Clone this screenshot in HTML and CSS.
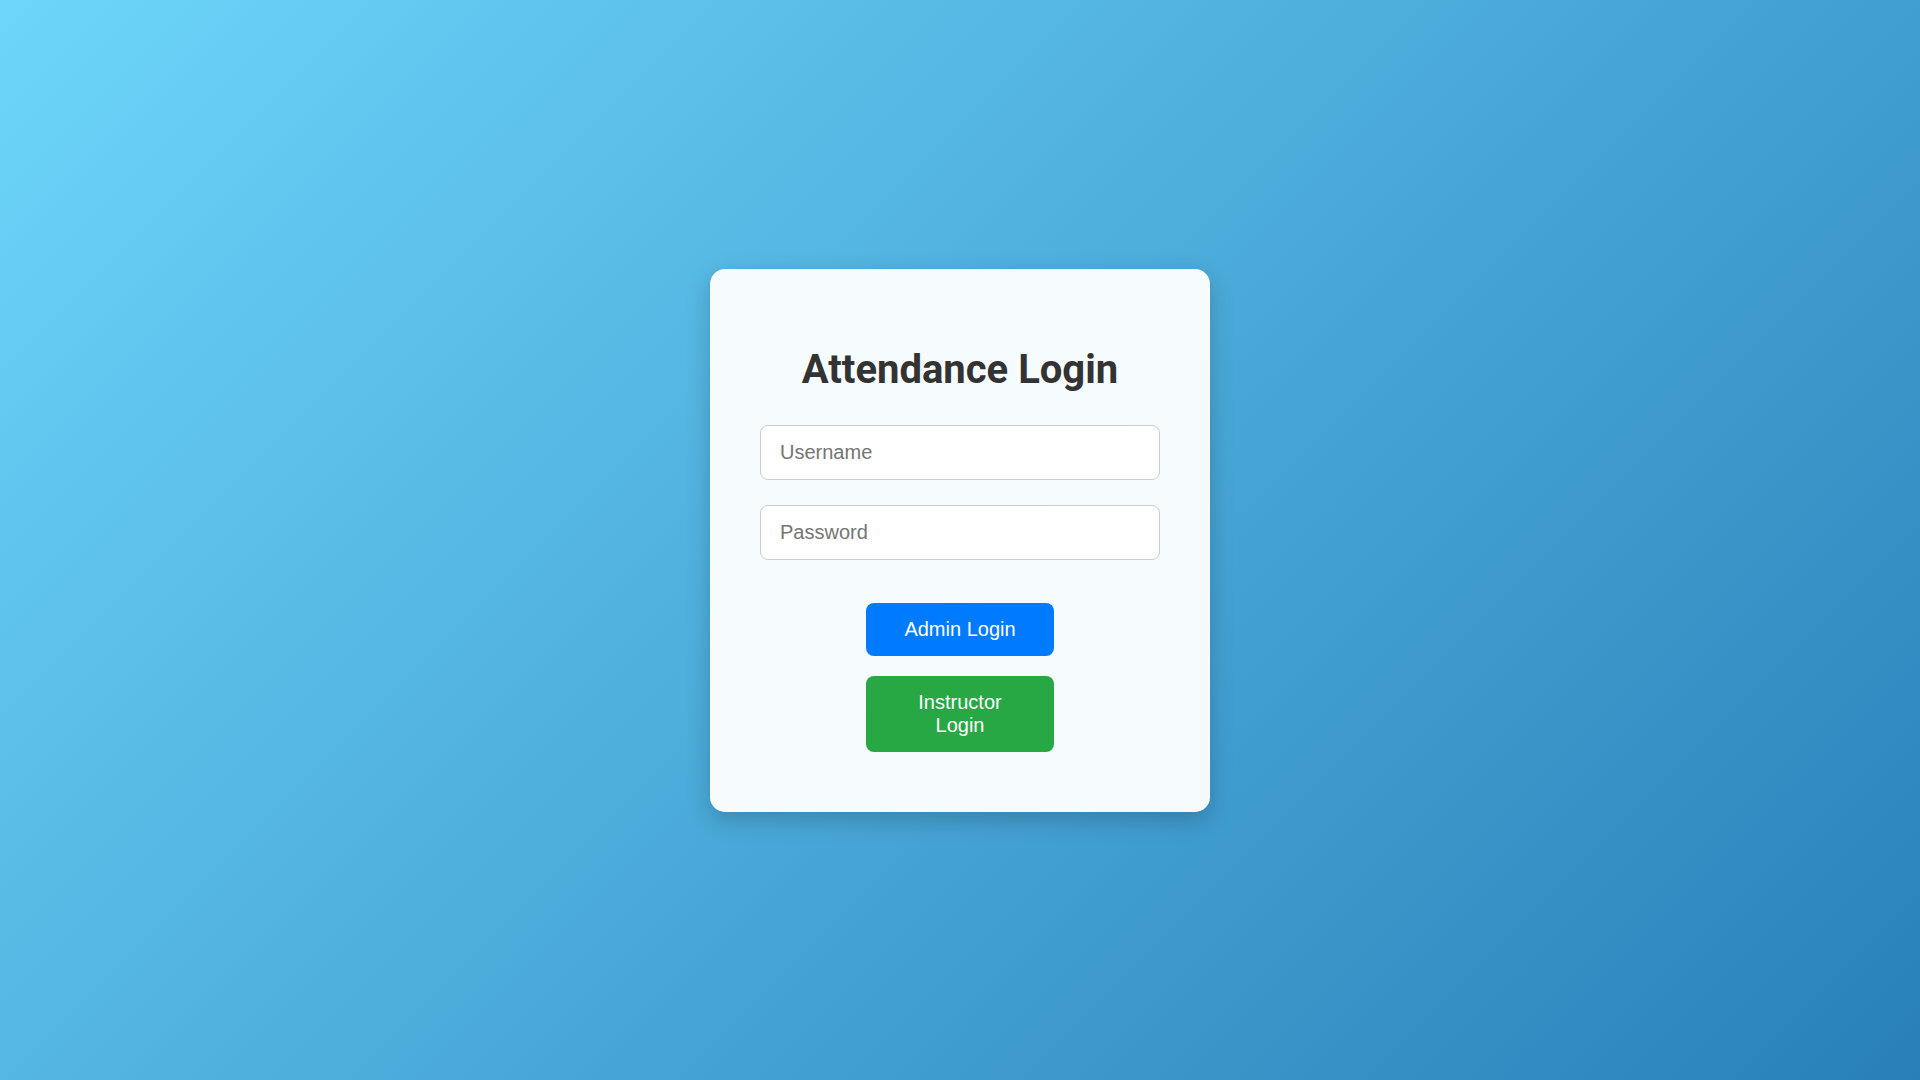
FILE: index.html
```html
<!DOCTYPE html>
<html>
<head>
<meta charset="utf-8">
<link rel="stylesheet" href="styles.css">
</head>
<body>
<div class="page">
  <div class="card">
    <h1 class="title">Attendance Login</h1>
    <input class="field" type="text" placeholder="Username">
    <input class="field" type="password" placeholder="Password">
    <div class="actions">
      <button class="btn btn-admin">Admin Login</button>
      <button class="btn btn-instructor">Instructor Login</button>
    </div>
  </div>
</div>
</body>
</html>
```
FILE: styles.css
```css
html, body {
  margin: 0;
  height: 100%;
}
body {
  background: linear-gradient(135deg, #6dd5fa, #2980b9);
  font-family: "Liberation Sans", Arial, sans-serif;
}
.page {
  height: 100%;
  display: flex;
  align-items: center;
  justify-content: center;
}
.card {
  width: 400px;
  padding: 50px 50px 60px;
  background: rgba(255, 255, 255, 0.95);
  border-radius: 15px;
  box-shadow: 0 8px 24px rgba(0, 0, 0, 0.2);
  display: flex;
  flex-direction: column;
}
.title {
  font-family: Roboto, "Liberation Sans", sans-serif;
  font-weight: 700;
  font-size: 40px;
  color: #333;
  text-align: center;
  margin: 27px 0 32px;
}
.field {
  box-sizing: border-box;
  width: 400px;
  height: 55px;
  padding: 15px 19px;
  border: 1px solid #ccc;
  border-radius: 8px;
  font-family: "Liberation Sans", Arial, sans-serif;
  font-size: 20px;
  background: #fff;
  margin: 0 0 25px;
}
.field::placeholder {
  color: #757575;
}
.actions {
  margin-top: 18px;
  display: flex;
  flex-direction: column;
  align-items: center;
  gap: 20px;
}
.btn {
  width: 188px;
  padding: 15px 30px;
  border: none;
  border-radius: 8px;
  color: #fff;
  font-family: "Liberation Sans", Arial, sans-serif;
  font-size: 20px;
  line-height: 23px;
  cursor: pointer;
}
.btn-admin { background: #007bff; }
.btn-instructor { background: #28a745; }
```
